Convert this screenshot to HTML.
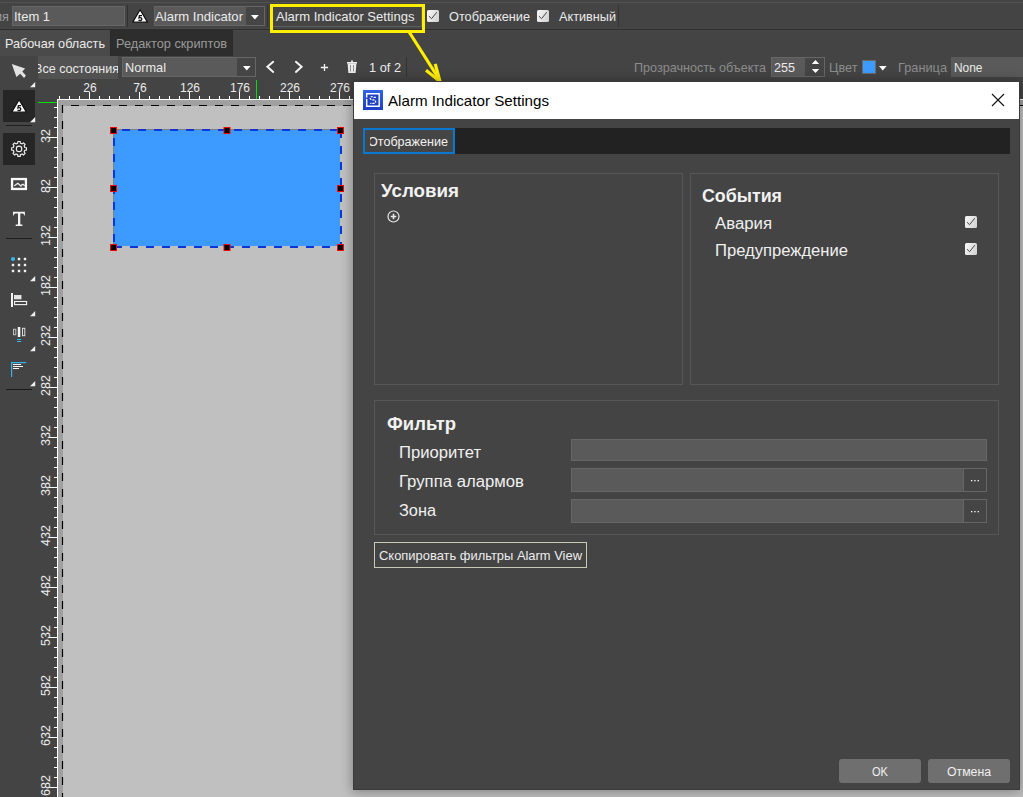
<!DOCTYPE html>
<html><head><meta charset="utf-8"><style>
html,body{margin:0;padding:0;}
body{width:1023px;height:797px;overflow:hidden;position:relative;background:#444;font-family:'Liberation Sans', sans-serif;}
</style></head><body>
<div style="position:absolute;left:0px;top:2px;width:1023px;height:1px;background:#525252"></div>
<div style="position:absolute;left:0px;top:28px;width:1023px;height:1px;background:#484848"></div>
<div style="position:absolute;left:0px;top:30px;width:1023px;height:1px;background:#484848"></div>
<div style="position:absolute;left:0px;top:29px;width:1023px;height:1px;background:#2d2d2d"></div>
<div style="position:absolute;left:-5px;top:10.00px;font:400 13px/13px 'Liberation Sans', sans-serif;color:#9a9a9a;white-space:nowrap;transform:scaleX(0.9782);transform-origin:0 0;">ия</div>
<div style="position:absolute;left:12px;top:6px;width:113px;height:20px;background:#5a5a5a;border:1px solid #666666;box-sizing:border-box"></div>
<div style="position:absolute;left:14px;top:10.00px;font:400 13px/13px 'Liberation Sans', sans-serif;color:#ebebeb;white-space:nowrap;transform:scaleX(0.9965);transform-origin:0 0;">Item 1</div>
<div style="position:absolute;left:127px;top:5px;width:1px;height:22px;background:#333"></div>
<svg style="position:absolute;left:131px;top:8px" width="18" height="16" viewBox="0 0 18 16"><path d="M9.1 1.7 L16.5 14.15 L1.7 14.15 Z" fill="#fff" stroke="#111" stroke-width="1.2" stroke-linejoin="round"/><path d="M11 7.7 H8.4 L8.0 9.9 C8.6 9.6 9.7 9.5 10.3 10 C10.9 10.5 10.9 11.6 10.3 12.1 C9.6 12.6 8.3 12.5 7.5 12.1" fill="none" stroke="#111" stroke-width="1.3"/></svg>
<div style="position:absolute;left:154px;top:6px;width:111px;height:20px;background:#5a5a5a;border:1px solid #666666;box-sizing:border-box"></div>
<div style="position:absolute;left:246px;top:7px;width:18px;height:18px;background:#454545"></div>
<svg style="position:absolute;left:251.3px;top:14.8px" width="9" height="6"><path d="M0 0 L7.8 0 L3.9 4.5 Z" fill="#fff"/></svg>
<div style="position:absolute;left:155px;top:10.00px;font:400 13px/13px 'Liberation Sans', sans-serif;color:#ebebeb;white-space:nowrap;transform:scaleX(1.0066);transform-origin:0 0;">Alarm Indicator</div>
<div style="position:absolute;left:267px;top:5px;width:1px;height:22px;background:#333"></div>
<div style="position:absolute;left:272px;top:6px;width:150px;height:20.5px;background:#454545;border:1px solid #5e5e5e;box-sizing:border-box"></div>
<div style="position:absolute;left:276px;top:10.00px;font:400 13px/13px 'Liberation Sans', sans-serif;color:#ebebeb;white-space:nowrap;transform:scaleX(1.0035);transform-origin:0 0;">Alarm Indicator Settings</div>
<div style="position:absolute;left:270px;top:4px;width:155px;height:29px;border:3px solid #ffee00;box-sizing:border-box"></div>
<svg style="position:absolute;left:427px;top:10px" width="12" height="12" viewBox="0 0 12 12"><defs><linearGradient id="cg" x1="0" y1="0" x2="1" y2="0.4"><stop offset="0" stop-color="#fafafa"/><stop offset="1" stop-color="#d6d6d6"/></linearGradient></defs><rect x="0" y="0" width="12" height="12" rx="1.6" fill="url(#cg)"/><path d="M1.9 6.1 L4.55 8.7 L9.8 2.2" fill="none" stroke="#474747" stroke-width="1"/></svg>
<div style="position:absolute;left:449px;top:10.00px;font:400 13px/13px 'Liberation Sans', sans-serif;color:#ebebeb;white-space:nowrap;transform:scaleX(0.9800);transform-origin:0 0;">Отображение</div>
<svg style="position:absolute;left:537px;top:10px" width="12" height="12" viewBox="0 0 12 12"><defs><linearGradient id="cg" x1="0" y1="0" x2="1" y2="0.4"><stop offset="0" stop-color="#fafafa"/><stop offset="1" stop-color="#d6d6d6"/></linearGradient></defs><rect x="0" y="0" width="12" height="12" rx="1.6" fill="url(#cg)"/><path d="M1.9 6.1 L4.55 8.7 L9.8 2.2" fill="none" stroke="#474747" stroke-width="1"/></svg>
<div style="position:absolute;left:559px;top:10.00px;font:400 13px/13px 'Liberation Sans', sans-serif;color:#ebebeb;white-space:nowrap;transform:scaleX(0.9757);transform-origin:0 0;">Активный</div>
<div style="position:absolute;left:618px;top:5px;width:1px;height:22px;background:#333"></div>
<div style="position:absolute;left:0px;top:30px;width:110px;height:26px;background:#4a4a4a"></div>
<div style="position:absolute;left:110px;top:30px;width:123px;height:26px;background:#2d2d2d"></div>
<div style="position:absolute;left:110px;top:30px;width:1px;height:26px;background:#2a2a2a"></div>
<div style="position:absolute;left:5px;top:37.00px;font:400 13px/13px 'Liberation Sans', sans-serif;color:#ebebeb;white-space:nowrap;transform:scaleX(0.9741);transform-origin:0 0;">Рабочая область</div>
<div style="position:absolute;left:116px;top:37.00px;font:400 13px/13px 'Liberation Sans', sans-serif;color:#9a9a9a;white-space:nowrap;transform:scaleX(0.9801);transform-origin:0 0;">Редактор скриптов</div>
<div style="position:absolute;left:38px;top:56px;width:80px;height:23px;background:#525252;overflow:hidden"><div style="position:absolute;right:-1px;top:5.9955px;font:400 13px/13px 'Liberation Sans', sans-serif;color:#ebebeb;white-space:nowrap;transform:scaleX(0.965);transform-origin:100% 0">Все состояния</div></div>
<div style="position:absolute;left:122px;top:57px;width:134px;height:20px;background:#5a5a5a;border:1px solid #666666;box-sizing:border-box"></div>
<div style="position:absolute;left:237px;top:58px;width:18px;height:18px;background:#454545"></div>
<svg style="position:absolute;left:242.8px;top:66px" width="9" height="6"><path d="M0 0 L7.6 0 L3.8 4.4 Z" fill="#fff"/></svg>
<div style="position:absolute;left:125px;top:61.00px;font:400 13px/13px 'Liberation Sans', sans-serif;color:#ebebeb;white-space:nowrap;transform:scaleX(0.9784);transform-origin:0 0;">Normal</div>
<svg style="position:absolute;left:264px;top:60px" width="150" height="16" viewBox="0 0 150 16"><path d="M9.2 1.8 L3.4 6.75 L9.2 11.9" fill="none" stroke="#f4f4f4" stroke-width="2" stroke-linecap="round"/><path d="M31.9 1.8 L37.6 6.75 L31.9 11.9" fill="none" stroke="#f4f4f4" stroke-width="2" stroke-linecap="round"/><path d="M56.8 7.5 H64.1 M60.5 4 V10.9" fill="none" stroke="#f4f4f4" stroke-width="1.3"/><rect x="83" y="2" width="10" height="1.6" fill="#f0f0f0"/><rect x="87.2" y="0.3" width="1.6" height="2" fill="#f0f0f0"/><path d="M83.6 3.5 L92.4 3.5 L91.6 13 L84.4 13 Z" fill="#ececec"/><rect x="86" y="5" width="0.8" height="6.5" fill="#777"/><rect x="89.2" y="5" width="0.8" height="6.5" fill="#777"/></svg>
<div style="position:absolute;left:369px;top:61.00px;font:400 13px/13px 'Liberation Sans', sans-serif;color:#ebebeb;white-space:nowrap;transform:scaleX(0.9837);transform-origin:0 0;">1 of 2</div>
<div style="position:absolute;left:406px;top:57px;width:1px;height:20px;background:#333"></div>
<div style="position:absolute;left:634px;top:61.00px;font:400 13px/13px 'Liberation Sans', sans-serif;color:#8c8c8c;white-space:nowrap;transform:scaleX(0.9685);transform-origin:0 0;">Прозрачность объекта</div>
<div style="position:absolute;left:771px;top:57px;width:54px;height:20px;background:#5a5a5a;border:1px solid #666666;box-sizing:border-box"></div>
<div style="position:absolute;left:805px;top:58px;width:19px;height:18px;background:#454545"></div>
<svg style="position:absolute;left:811px;top:59px" width="10" height="16"><path d="M0.8 5 L4.5 1 L8.2 5 Z M0.8 10 L4.5 14 L8.2 10 Z" fill="#fff"/></svg>
<div style="position:absolute;left:774px;top:61.00px;font:400 13px/13px 'Liberation Sans', sans-serif;color:#ebebeb;white-space:nowrap;transform:scaleX(0.9676);transform-origin:0 0;">255</div>
<div style="position:absolute;left:829px;top:61.00px;font:400 13px/13px 'Liberation Sans', sans-serif;color:#8c8c8c;white-space:nowrap;transform:scaleX(0.9780);transform-origin:0 0;">Цвет</div>
<div style="position:absolute;left:862px;top:60px;width:14px;height:14px;background:#3d9bff;border:1px solid #6a6a6a;box-sizing:border-box"></div>
<svg style="position:absolute;left:878.5px;top:66px" width="9" height="6"><path d="M0 0 L7.6 0 L3.8 4.5 Z" fill="#fff"/></svg>
<div style="position:absolute;left:898px;top:61.00px;font:400 13px/13px 'Liberation Sans', sans-serif;color:#8c8c8c;white-space:nowrap;transform:scaleX(0.9821);transform-origin:0 0;">Граница</div>
<div style="position:absolute;left:951px;top:57px;width:80px;height:20px;background:#5a5a5a"></div>
<div style="position:absolute;left:953.5px;top:61.00px;font:400 13px/13px 'Liberation Sans', sans-serif;color:#ebebeb;white-space:nowrap;transform:scaleX(0.9170);transform-origin:0 0;">None</div>
<svg style="position:absolute;left:0;top:0" width="40" height="90"><path d="M11.8 64 L25.1 68.6 L22.3 71.6 L25.9 75.6 L24.1 77.9 L20.2 73.7 L16.4 76.9 Z" fill="#e2e2e2"/></svg>
<svg style="position:absolute;left:29.9px;top:81.6px" width="6" height="6"><path d="M5.2 0 L5.2 5.3 L0 5.3 Z" fill="#f0f0f0"/></svg>
<div style="position:absolute;left:3px;top:90px;width:32px;height:32px;background:#262626"></div>
<svg style="position:absolute;left:10px;top:98px" width="18" height="16" viewBox="0 0 18 16"><path d="M9.1 1.7 L16.5 14.15 L1.7 14.15 Z" fill="#fff" stroke="#111" stroke-width="1.2" stroke-linejoin="round"/><path d="M11 7.7 H8.4 L8.0 9.9 C8.6 9.6 9.7 9.5 10.3 10 C10.9 10.5 10.9 11.6 10.3 12.1 C9.6 12.6 8.3 12.5 7.5 12.1" fill="none" stroke="#111" stroke-width="1.3"/></svg>
<svg style="position:absolute;left:29.9px;top:116.8px" width="6" height="6"><path d="M5.2 0 L5.2 5.3 L0 5.3 Z" fill="#f0f0f0"/></svg>
<div style="position:absolute;left:6px;top:125px;width:26px;height:1px;background:#1e1e1e"></div>
<div style="position:absolute;left:3px;top:133px;width:32px;height:32px;background:#262626"></div>
<svg style="position:absolute;left:10px;top:140px" width="18" height="18" viewBox="0 0 18 18"><path d="M7.67 3.16 L7.88 1.49 L10.22 1.49 L10.43 3.16 L12.13 3.87 L13.46 2.83 L15.12 4.49 L14.08 5.82 L14.79 7.52 L16.46 7.73 L16.46 10.07 L14.79 10.28 L14.08 11.98 L15.12 13.31 L13.46 14.97 L12.13 13.93 L10.43 14.64 L10.22 16.31 L7.88 16.31 L7.67 14.64 L5.97 13.93 L4.64 14.97 L2.98 13.31 L4.02 11.98 L3.31 10.28 L1.64 10.07 L1.64 7.73 L3.31 7.52 L4.02 5.82 L2.98 4.49 L4.64 2.83 L5.97 3.87 Z" fill="none" stroke="#f0f0f0" stroke-width="1.15" stroke-linejoin="round"/><circle cx="9.05" cy="8.9" r="2.75" fill="none" stroke="#f0f0f0" stroke-width="1.15"/></svg>
<svg style="position:absolute;left:10px;top:177px" width="18" height="14" viewBox="0 0 18 14"><rect x="2.05" y="2.05" width="13.86" height="9.9" fill="none" stroke="#fafafa" stroke-width="2.3"/><path d="M4.35 8.7 L7.8 6.3 L11.5 9.6 M11.3 8.1 L13 7.2 L14.8 8.9" fill="none" stroke="#f0f0f0" stroke-width="1.3"/></svg>
<svg style="position:absolute;left:0;top:0" width="40" height="240"><path d="M13 211.8 H24.9 V215.6 L24.2 215.6 C23.9 214.2 23.4 213.6 22 213.6 H20.3 V224.6 H22.4 V225.9 H15.7 V224.6 H18 V213.6 H16 C14.6 213.6 14 214.2 13.7 215.6 H13 Z" fill="#f4f4f4"/></svg>
<div style="position:absolute;left:6px;top:238px;width:26px;height:1.3px;background:#1e1e1e"></div>
<svg style="position:absolute;left:0;top:0" width="40" height="400"><circle cx="13" cy="259" r="2.1" fill="#38b6ea"/><rect x="17.8" y="257.8" width="2.4" height="2.4" fill="#f2f2f2"/><rect x="23.8" y="257.8" width="2.4" height="2.4" fill="#f2f2f2"/><rect x="11.8" y="263.8" width="2.4" height="2.4" fill="#f2f2f2"/><rect x="17.8" y="263.8" width="2.4" height="2.4" fill="#f2f2f2"/><rect x="23.8" y="263.8" width="2.4" height="2.4" fill="#f2f2f2"/><rect x="11.8" y="269.8" width="2.4" height="2.4" fill="#f2f2f2"/><rect x="17.8" y="269.8" width="2.4" height="2.4" fill="#f2f2f2"/><rect x="23.8" y="269.8" width="2.4" height="2.4" fill="#f2f2f2"/></svg>
<svg style="position:absolute;left:29.9px;top:275.6px" width="6" height="6"><path d="M5.2 0 L5.2 5.3 L0 5.3 Z" fill="#f0f0f0"/></svg>
<svg style="position:absolute;left:0;top:0" width="40" height="400"><rect x="11" y="293" width="2" height="14" fill="#f4f4f4"/><rect x="14.5" y="295.5" width="6.5" height="3.4" fill="#e4e4e4" stroke="#f4f4f4" stroke-width="0.8"/><rect x="14.6" y="301.5" width="12" height="3.1" fill="none" stroke="#f4f4f4" stroke-width="1.1"/></svg>
<svg style="position:absolute;left:29.9px;top:310.6px" width="6" height="6"><path d="M5.2 0 L5.2 5.3 L0 5.3 Z" fill="#f0f0f0"/></svg>
<svg style="position:absolute;left:0;top:0" width="40" height="400"><rect x="13.5" y="329.3" width="2.3" height="5.4" fill="none" stroke="#c4c4c4" stroke-width="1"/><rect x="17.8" y="327" width="2.5" height="10" fill="#f4f4f4"/><rect x="22.5" y="328.3" width="2.3" height="7.4" fill="none" stroke="#dcdcdc" stroke-width="1"/><rect x="17" y="339" width="4.2" height="1" fill="#38b6ea"/><rect x="17" y="341" width="4.2" height="1" fill="#38b6ea"/></svg>
<svg style="position:absolute;left:29.9px;top:345.6px" width="6" height="6"><path d="M5.2 0 L5.2 5.3 L0 5.3 Z" fill="#f0f0f0"/></svg>
<svg style="position:absolute;left:0;top:0" width="40" height="400"><rect x="11" y="362" width="1.2" height="15" fill="#38b6ea"/><rect x="11" y="362" width="15.2" height="1.2" fill="#38b6ea"/><rect x="13" y="364" width="8" height="1" fill="#f4f4f4"/><rect x="13" y="366" width="10" height="1" fill="#f4f4f4"/><rect x="13" y="368" width="6" height="1" fill="#f4f4f4"/></svg>
<svg style="position:absolute;left:29.9px;top:380.6px" width="6" height="6"><path d="M5.2 0 L5.2 5.3 L0 5.3 Z" fill="#f0f0f0"/></svg>
<div style="position:absolute;left:6px;top:389px;width:26px;height:1.3px;background:#1a1a1a"></div>
<svg style="position:absolute;left:0;top:0" width="1023" height="797"><rect x="59" y="96" width="1" height="3" fill="#fff"/><rect x="69" y="96" width="1" height="3" fill="#fff"/><rect x="79" y="96" width="1" height="3" fill="#fff"/><rect x="89" y="92" width="1" height="7" fill="#fff"/><rect x="99" y="96" width="1" height="3" fill="#fff"/><rect x="109" y="96" width="1" height="3" fill="#fff"/><rect x="119" y="96" width="1" height="3" fill="#fff"/><rect x="129" y="96" width="1" height="3" fill="#fff"/><rect x="139" y="92" width="1" height="7" fill="#fff"/><rect x="149" y="96" width="1" height="3" fill="#fff"/><rect x="159" y="96" width="1" height="3" fill="#fff"/><rect x="169" y="96" width="1" height="3" fill="#fff"/><rect x="179" y="96" width="1" height="3" fill="#fff"/><rect x="189" y="92" width="1" height="7" fill="#fff"/><rect x="199" y="96" width="1" height="3" fill="#fff"/><rect x="209" y="96" width="1" height="3" fill="#fff"/><rect x="219" y="96" width="1" height="3" fill="#fff"/><rect x="229" y="96" width="1" height="3" fill="#fff"/><rect x="239" y="92" width="1" height="7" fill="#fff"/><rect x="249" y="96" width="1" height="3" fill="#fff"/><rect x="259" y="96" width="1" height="3" fill="#fff"/><rect x="269" y="96" width="1" height="3" fill="#fff"/><rect x="279" y="96" width="1" height="3" fill="#fff"/><rect x="289" y="92" width="1" height="7" fill="#fff"/><rect x="299" y="96" width="1" height="3" fill="#fff"/><rect x="309" y="96" width="1" height="3" fill="#fff"/><rect x="319" y="96" width="1" height="3" fill="#fff"/><rect x="329" y="96" width="1" height="3" fill="#fff"/><rect x="339" y="92" width="1" height="7" fill="#fff"/><rect x="349" y="96" width="1" height="3" fill="#fff"/><rect x="359" y="96" width="1" height="3" fill="#fff"/><rect x="369" y="96" width="1" height="3" fill="#fff"/><rect x="379" y="96" width="1" height="3" fill="#fff"/><rect x="389" y="92" width="1" height="7" fill="#fff"/><rect x="399" y="96" width="1" height="3" fill="#fff"/><rect x="409" y="96" width="1" height="3" fill="#fff"/><rect x="419" y="96" width="1" height="3" fill="#fff"/><rect x="429" y="96" width="1" height="3" fill="#fff"/><rect x="439" y="92" width="1" height="7" fill="#fff"/><rect x="449" y="96" width="1" height="3" fill="#fff"/><rect x="459" y="96" width="1" height="3" fill="#fff"/><rect x="469" y="96" width="1" height="3" fill="#fff"/><rect x="479" y="96" width="1" height="3" fill="#fff"/><rect x="489" y="92" width="1" height="7" fill="#fff"/><rect x="499" y="96" width="1" height="3" fill="#fff"/><rect x="509" y="96" width="1" height="3" fill="#fff"/><rect x="519" y="96" width="1" height="3" fill="#fff"/><rect x="529" y="96" width="1" height="3" fill="#fff"/><rect x="539" y="92" width="1" height="7" fill="#fff"/><rect x="549" y="96" width="1" height="3" fill="#fff"/><rect x="559" y="96" width="1" height="3" fill="#fff"/><rect x="569" y="96" width="1" height="3" fill="#fff"/><rect x="579" y="96" width="1" height="3" fill="#fff"/><rect x="589" y="92" width="1" height="7" fill="#fff"/><rect x="599" y="96" width="1" height="3" fill="#fff"/><rect x="609" y="96" width="1" height="3" fill="#fff"/><rect x="619" y="96" width="1" height="3" fill="#fff"/><rect x="629" y="96" width="1" height="3" fill="#fff"/><rect x="639" y="92" width="1" height="7" fill="#fff"/><rect x="649" y="96" width="1" height="3" fill="#fff"/><rect x="659" y="96" width="1" height="3" fill="#fff"/><rect x="669" y="96" width="1" height="3" fill="#fff"/><rect x="679" y="96" width="1" height="3" fill="#fff"/><rect x="689" y="92" width="1" height="7" fill="#fff"/><rect x="699" y="96" width="1" height="3" fill="#fff"/><rect x="709" y="96" width="1" height="3" fill="#fff"/><rect x="719" y="96" width="1" height="3" fill="#fff"/><rect x="729" y="96" width="1" height="3" fill="#fff"/><rect x="739" y="92" width="1" height="7" fill="#fff"/><rect x="749" y="96" width="1" height="3" fill="#fff"/><rect x="759" y="96" width="1" height="3" fill="#fff"/><rect x="769" y="96" width="1" height="3" fill="#fff"/><rect x="779" y="96" width="1" height="3" fill="#fff"/><rect x="789" y="92" width="1" height="7" fill="#fff"/><rect x="799" y="96" width="1" height="3" fill="#fff"/><rect x="809" y="96" width="1" height="3" fill="#fff"/><rect x="819" y="96" width="1" height="3" fill="#fff"/><rect x="829" y="96" width="1" height="3" fill="#fff"/><rect x="839" y="92" width="1" height="7" fill="#fff"/><rect x="849" y="96" width="1" height="3" fill="#fff"/><rect x="859" y="96" width="1" height="3" fill="#fff"/><rect x="869" y="96" width="1" height="3" fill="#fff"/><rect x="879" y="96" width="1" height="3" fill="#fff"/><rect x="889" y="92" width="1" height="7" fill="#fff"/><rect x="899" y="96" width="1" height="3" fill="#fff"/><rect x="909" y="96" width="1" height="3" fill="#fff"/><rect x="919" y="96" width="1" height="3" fill="#fff"/><rect x="929" y="96" width="1" height="3" fill="#fff"/><rect x="939" y="92" width="1" height="7" fill="#fff"/><rect x="949" y="96" width="1" height="3" fill="#fff"/><rect x="959" y="96" width="1" height="3" fill="#fff"/><rect x="969" y="96" width="1" height="3" fill="#fff"/><rect x="979" y="96" width="1" height="3" fill="#fff"/><rect x="989" y="92" width="1" height="7" fill="#fff"/><rect x="999" y="96" width="1" height="3" fill="#fff"/><rect x="1009" y="96" width="1" height="3" fill="#fff"/><rect x="1019" y="96" width="1" height="3" fill="#fff"/><rect x="54" y="107" width="3" height="1" fill="#fff"/><rect x="54" y="117" width="3" height="1" fill="#fff"/><rect x="54" y="127" width="3" height="1" fill="#fff"/><rect x="49" y="137" width="8" height="1" fill="#fff"/><rect x="54" y="147" width="3" height="1" fill="#fff"/><rect x="54" y="157" width="3" height="1" fill="#fff"/><rect x="54" y="167" width="3" height="1" fill="#fff"/><rect x="54" y="177" width="3" height="1" fill="#fff"/><rect x="49" y="187" width="8" height="1" fill="#fff"/><rect x="54" y="197" width="3" height="1" fill="#fff"/><rect x="54" y="207" width="3" height="1" fill="#fff"/><rect x="54" y="217" width="3" height="1" fill="#fff"/><rect x="54" y="227" width="3" height="1" fill="#fff"/><rect x="49" y="237" width="8" height="1" fill="#fff"/><rect x="54" y="247" width="3" height="1" fill="#fff"/><rect x="54" y="257" width="3" height="1" fill="#fff"/><rect x="54" y="267" width="3" height="1" fill="#fff"/><rect x="54" y="277" width="3" height="1" fill="#fff"/><rect x="49" y="287" width="8" height="1" fill="#fff"/><rect x="54" y="297" width="3" height="1" fill="#fff"/><rect x="54" y="307" width="3" height="1" fill="#fff"/><rect x="54" y="317" width="3" height="1" fill="#fff"/><rect x="54" y="327" width="3" height="1" fill="#fff"/><rect x="49" y="337" width="8" height="1" fill="#fff"/><rect x="54" y="347" width="3" height="1" fill="#fff"/><rect x="54" y="357" width="3" height="1" fill="#fff"/><rect x="54" y="367" width="3" height="1" fill="#fff"/><rect x="54" y="377" width="3" height="1" fill="#fff"/><rect x="49" y="387" width="8" height="1" fill="#fff"/><rect x="54" y="397" width="3" height="1" fill="#fff"/><rect x="54" y="407" width="3" height="1" fill="#fff"/><rect x="54" y="417" width="3" height="1" fill="#fff"/><rect x="54" y="427" width="3" height="1" fill="#fff"/><rect x="49" y="437" width="8" height="1" fill="#fff"/><rect x="54" y="447" width="3" height="1" fill="#fff"/><rect x="54" y="457" width="3" height="1" fill="#fff"/><rect x="54" y="467" width="3" height="1" fill="#fff"/><rect x="54" y="477" width="3" height="1" fill="#fff"/><rect x="49" y="487" width="8" height="1" fill="#fff"/><rect x="54" y="497" width="3" height="1" fill="#fff"/><rect x="54" y="507" width="3" height="1" fill="#fff"/><rect x="54" y="517" width="3" height="1" fill="#fff"/><rect x="54" y="527" width="3" height="1" fill="#fff"/><rect x="49" y="537" width="8" height="1" fill="#fff"/><rect x="54" y="547" width="3" height="1" fill="#fff"/><rect x="54" y="557" width="3" height="1" fill="#fff"/><rect x="54" y="567" width="3" height="1" fill="#fff"/><rect x="54" y="577" width="3" height="1" fill="#fff"/><rect x="49" y="587" width="8" height="1" fill="#fff"/><rect x="54" y="597" width="3" height="1" fill="#fff"/><rect x="54" y="607" width="3" height="1" fill="#fff"/><rect x="54" y="617" width="3" height="1" fill="#fff"/><rect x="54" y="627" width="3" height="1" fill="#fff"/><rect x="49" y="637" width="8" height="1" fill="#fff"/><rect x="54" y="647" width="3" height="1" fill="#fff"/><rect x="54" y="657" width="3" height="1" fill="#fff"/><rect x="54" y="667" width="3" height="1" fill="#fff"/><rect x="54" y="677" width="3" height="1" fill="#fff"/><rect x="49" y="687" width="8" height="1" fill="#fff"/><rect x="54" y="697" width="3" height="1" fill="#fff"/><rect x="54" y="707" width="3" height="1" fill="#fff"/><rect x="54" y="717" width="3" height="1" fill="#fff"/><rect x="54" y="727" width="3" height="1" fill="#fff"/><rect x="49" y="737" width="8" height="1" fill="#fff"/><rect x="54" y="747" width="3" height="1" fill="#fff"/><rect x="54" y="757" width="3" height="1" fill="#fff"/><rect x="54" y="767" width="3" height="1" fill="#fff"/><rect x="54" y="777" width="3" height="1" fill="#fff"/><rect x="49" y="787" width="8" height="1" fill="#fff"/><rect x="57" y="99" width="966" height="1" fill="#fff"/><rect x="57" y="99" width="1" height="698" fill="#fff"/><rect x="256" y="80" width="1" height="19" fill="#00e000"/><rect x="38" y="102" width="19" height="1" fill="#00e000"/></svg>
<div style="position:absolute;left:80px;top:81.84px;font:400 12px/12px 'Liberation Sans', sans-serif;color:#ebebeb;white-space:nowrap;width:20px;text-align:center;">26</div>
<div style="position:absolute;left:130px;top:81.84px;font:400 12px/12px 'Liberation Sans', sans-serif;color:#ebebeb;white-space:nowrap;width:20px;text-align:center;">76</div>
<div style="position:absolute;left:180px;top:81.84px;font:400 12px/12px 'Liberation Sans', sans-serif;color:#ebebeb;white-space:nowrap;width:20px;text-align:center;">126</div>
<div style="position:absolute;left:230px;top:81.84px;font:400 12px/12px 'Liberation Sans', sans-serif;color:#ebebeb;white-space:nowrap;width:20px;text-align:center;">176</div>
<div style="position:absolute;left:280px;top:81.84px;font:400 12px/12px 'Liberation Sans', sans-serif;color:#ebebeb;white-space:nowrap;width:20px;text-align:center;">226</div>
<div style="position:absolute;left:330px;top:81.84px;font:400 12px/12px 'Liberation Sans', sans-serif;color:#ebebeb;white-space:nowrap;width:20px;text-align:center;">276</div>
<div style="position:absolute;left:35.5px;top:126px;width:20px;height:20px;"><div style="position:absolute;left:0;top:0;width:20px;height:20px;transform:rotate(-90deg);font:400 12.5px/20px 'Liberation Sans', sans-serif;color:#ebebeb;text-align:center;">32</div></div>
<div style="position:absolute;left:35.5px;top:176px;width:20px;height:20px;"><div style="position:absolute;left:0;top:0;width:20px;height:20px;transform:rotate(-90deg);font:400 12.5px/20px 'Liberation Sans', sans-serif;color:#ebebeb;text-align:center;">82</div></div>
<div style="position:absolute;left:35.5px;top:226px;width:20px;height:20px;"><div style="position:absolute;left:0;top:0;width:20px;height:20px;transform:rotate(-90deg);font:400 12.5px/20px 'Liberation Sans', sans-serif;color:#ebebeb;text-align:center;">132</div></div>
<div style="position:absolute;left:35.5px;top:276px;width:20px;height:20px;"><div style="position:absolute;left:0;top:0;width:20px;height:20px;transform:rotate(-90deg);font:400 12.5px/20px 'Liberation Sans', sans-serif;color:#ebebeb;text-align:center;">182</div></div>
<div style="position:absolute;left:35.5px;top:326px;width:20px;height:20px;"><div style="position:absolute;left:0;top:0;width:20px;height:20px;transform:rotate(-90deg);font:400 12.5px/20px 'Liberation Sans', sans-serif;color:#ebebeb;text-align:center;">232</div></div>
<div style="position:absolute;left:35.5px;top:376px;width:20px;height:20px;"><div style="position:absolute;left:0;top:0;width:20px;height:20px;transform:rotate(-90deg);font:400 12.5px/20px 'Liberation Sans', sans-serif;color:#ebebeb;text-align:center;">282</div></div>
<div style="position:absolute;left:35.5px;top:426px;width:20px;height:20px;"><div style="position:absolute;left:0;top:0;width:20px;height:20px;transform:rotate(-90deg);font:400 12.5px/20px 'Liberation Sans', sans-serif;color:#ebebeb;text-align:center;">332</div></div>
<div style="position:absolute;left:35.5px;top:476px;width:20px;height:20px;"><div style="position:absolute;left:0;top:0;width:20px;height:20px;transform:rotate(-90deg);font:400 12.5px/20px 'Liberation Sans', sans-serif;color:#ebebeb;text-align:center;">382</div></div>
<div style="position:absolute;left:35.5px;top:526px;width:20px;height:20px;"><div style="position:absolute;left:0;top:0;width:20px;height:20px;transform:rotate(-90deg);font:400 12.5px/20px 'Liberation Sans', sans-serif;color:#ebebeb;text-align:center;">432</div></div>
<div style="position:absolute;left:35.5px;top:576px;width:20px;height:20px;"><div style="position:absolute;left:0;top:0;width:20px;height:20px;transform:rotate(-90deg);font:400 12.5px/20px 'Liberation Sans', sans-serif;color:#ebebeb;text-align:center;">482</div></div>
<div style="position:absolute;left:35.5px;top:626px;width:20px;height:20px;"><div style="position:absolute;left:0;top:0;width:20px;height:20px;transform:rotate(-90deg);font:400 12.5px/20px 'Liberation Sans', sans-serif;color:#ebebeb;text-align:center;">532</div></div>
<div style="position:absolute;left:35.5px;top:676px;width:20px;height:20px;"><div style="position:absolute;left:0;top:0;width:20px;height:20px;transform:rotate(-90deg);font:400 12.5px/20px 'Liberation Sans', sans-serif;color:#ebebeb;text-align:center;">582</div></div>
<div style="position:absolute;left:35.5px;top:726px;width:20px;height:20px;"><div style="position:absolute;left:0;top:0;width:20px;height:20px;transform:rotate(-90deg);font:400 12.5px/20px 'Liberation Sans', sans-serif;color:#ebebeb;text-align:center;">632</div></div>
<div style="position:absolute;left:35.5px;top:776px;width:20px;height:20px;"><div style="position:absolute;left:0;top:0;width:20px;height:20px;transform:rotate(-90deg);font:400 12.5px/20px 'Liberation Sans', sans-serif;color:#ebebeb;text-align:center;">682</div></div>
<div style="position:absolute;left:58px;top:100px;width:965px;height:697px;background:#a0a0a0"></div>
<div style="position:absolute;left:63px;top:106px;width:960px;height:691px;background:#c0c0c0"></div>
<svg style="position:absolute;left:0;top:0" width="1023" height="797"><line x1="71" y1="105.5" x2="1023" y2="105.5" stroke="#000" stroke-width="1" stroke-dasharray="8 8"/><line x1="62.5" y1="105" x2="62.5" y2="797" stroke="#000" stroke-width="1.2" stroke-dasharray="8 8"/></svg>
<div style="position:absolute;left:113px;top:129px;width:227px;height:117px;background:#3d9bff;border-top:1px solid #7f7f7f;border-left:1px solid #7f7f7f;box-sizing:border-box"></div>
<svg style="position:absolute;left:0;top:0" width="1023" height="797"><line x1="122" y1="130" x2="340" y2="130" stroke="#0a37d8" stroke-width="2" stroke-dasharray="8 8"/><line x1="114" y1="247" x2="340" y2="247" stroke="#0a37d8" stroke-width="2" stroke-dasharray="8 8"/><line x1="114" y1="138" x2="114" y2="246" stroke="#0a37d8" stroke-width="2" stroke-dasharray="8 8"/><line x1="341" y1="130" x2="341" y2="248" stroke="#0a37d8" stroke-width="2" stroke-dasharray="8 8"/><rect x="110.5" y="127.5" width="6" height="6" fill="#000" stroke="#ff0000" stroke-width="1"/><rect x="110.5" y="185.5" width="6" height="6" fill="#000" stroke="#ff0000" stroke-width="1"/><rect x="110.5" y="244.5" width="6" height="6" fill="#000" stroke="#ff0000" stroke-width="1"/><rect x="224" y="127.5" width="6" height="6" fill="#000" stroke="#ff0000" stroke-width="1"/><rect x="224" y="244.5" width="6" height="6" fill="#000" stroke="#ff0000" stroke-width="1"/><rect x="337.5" y="127.5" width="6" height="6" fill="#000" stroke="#ff0000" stroke-width="1"/><rect x="337.5" y="185.5" width="6" height="6" fill="#000" stroke="#ff0000" stroke-width="1"/><rect x="337.5" y="244.5" width="6" height="6" fill="#000" stroke="#ff0000" stroke-width="1"/></svg>
<svg style="position:absolute;left:0;top:0" width="1023" height="797"><path d="M408.5 31 L439 79" stroke="#ffee00" stroke-width="3.2" fill="none"/><path d="M426 70.3 L440 81.5 L435.2 63.8" stroke="#ffee00" stroke-width="3.2" fill="none" stroke-linejoin="miter"/></svg>
<div style="position:absolute;left:353px;top:81px;width:667px;height:709px;background:#444;box-shadow:0 1px 11px 1px rgba(0,0,0,0.32);border:1px solid #3a3a3a;box-sizing:border-box"></div>
<div style="position:absolute;left:354px;top:82px;width:665px;height:37px;background:#fff"></div>
<svg style="position:absolute;left:363px;top:90px" width="20" height="20" viewBox="0 0 20 20"><defs><linearGradient id="ig" x1="0" y1="0" x2="0" y2="1"><stop offset="0" stop-color="#3064e6"/><stop offset="1" stop-color="#1b3fc4"/></linearGradient></defs><rect width="20" height="20" fill="url(#ig)"/><rect x="4.3" y="4.3" width="11.4" height="11.4" fill="#1e40c4"/><path d="M3.7 7.6 V3.7 H16.2 V16.2 H3.7 V9" fill="none" stroke="#fff" stroke-width="1.4"/><path d="M12.9 7.4 H11.2 C9 6 7 6.8 7.2 8.5 C7.4 9.9 9.8 9.8 11.6 10.2 C13.3 10.8 13.1 13.3 10.6 13.3 H7.2" fill="none" stroke="#fff" stroke-width="1.25" stroke-dasharray="2.2 0.9"/></svg>
<div style="position:absolute;left:388px;top:93.30px;font:400 15px/15px 'Liberation Sans', sans-serif;color:#000;white-space:nowrap;transform:scaleX(1.0110);transform-origin:0 0;">Alarm Indicator Settings</div>
<svg style="position:absolute;left:991px;top:93px" width="14" height="14"><path d="M1 1 L13 13 M13 1 L1 13" stroke="#111" stroke-width="1.1"/></svg>
<div style="position:absolute;left:363px;top:128px;width:647px;height:26px;background:#222"></div>
<div style="position:absolute;left:363px;top:128px;width:92px;height:26px;background:#454545;border:2px solid #0a78d0;box-sizing:border-box;overflow:hidden"></div>
<div style="position:absolute;left:369.5px;top:130px;width:84px;height:22px;overflow:hidden">
<div style="position:absolute;left:-1.5px;top:5.00px;font:400 13px/13px 'Liberation Sans', sans-serif;color:#f2f2f2;white-space:nowrap;transform:scaleX(0.9679);transform-origin:0 0;">Отображение</div>
</div>
<div style="position:absolute;left:374px;top:173px;width:309px;height:212px;border:1px solid #575757;box-sizing:border-box"></div>
<div style="position:absolute;left:690px;top:173px;width:309px;height:212px;border:1px solid #575757;box-sizing:border-box"></div>
<div style="position:absolute;left:381px;top:181.76px;font:700 18px/18px 'Liberation Sans', sans-serif;color:#f2f2f2;white-space:nowrap;transform:scaleX(1.0413);transform-origin:0 0;">Условия</div>
<svg style="position:absolute;left:386.5px;top:210.3px" width="13" height="13" viewBox="0 0 13 13"><circle cx="6.5" cy="6.5" r="5.5" fill="none" stroke="#e8e8e8" stroke-width="1.2"/><path d="M3.7 6.5 H9.3 M6.5 3.7 V9.3" stroke="#e8e8e8" stroke-width="1.6"/></svg>
<div style="position:absolute;left:702px;top:186.76px;font:700 18px/18px 'Liberation Sans', sans-serif;color:#f2f2f2;white-space:nowrap;transform:scaleX(0.9892);transform-origin:0 0;">События</div>
<div style="position:absolute;left:715px;top:216.46px;font:400 16px/16px 'Liberation Sans', sans-serif;color:#f0f0f0;white-space:nowrap;transform:scaleX(1.0480);transform-origin:0 0;">Авария</div>
<div style="position:absolute;left:715px;top:243.46px;font:400 16px/16px 'Liberation Sans', sans-serif;color:#f0f0f0;white-space:nowrap;transform:scaleX(1.0377);transform-origin:0 0;">Предупреждение</div>
<svg style="position:absolute;left:965px;top:216px" width="12" height="12" viewBox="0 0 12 12"><defs><linearGradient id="cg" x1="0" y1="0" x2="1" y2="0.4"><stop offset="0" stop-color="#fafafa"/><stop offset="1" stop-color="#d6d6d6"/></linearGradient></defs><rect x="0" y="0" width="12" height="12" rx="1.6" fill="url(#cg)"/><path d="M1.9 6.1 L4.55 8.7 L9.8 2.2" fill="none" stroke="#474747" stroke-width="1"/></svg>
<svg style="position:absolute;left:965px;top:243px" width="12" height="12" viewBox="0 0 12 12"><defs><linearGradient id="cg" x1="0" y1="0" x2="1" y2="0.4"><stop offset="0" stop-color="#fafafa"/><stop offset="1" stop-color="#d6d6d6"/></linearGradient></defs><rect x="0" y="0" width="12" height="12" rx="1.6" fill="url(#cg)"/><path d="M1.9 6.1 L4.55 8.7 L9.8 2.2" fill="none" stroke="#474747" stroke-width="1"/></svg>
<div style="position:absolute;left:374px;top:400px;width:625px;height:135px;border:1px solid #575757;box-sizing:border-box"></div>
<div style="position:absolute;left:387px;top:414.76px;font:700 18px/18px 'Liberation Sans', sans-serif;color:#f2f2f2;white-space:nowrap;transform:scaleX(1.0272);transform-origin:0 0;">Фильтр</div>
<div style="position:absolute;left:399px;top:445.46px;font:400 16px/16px 'Liberation Sans', sans-serif;color:#f0f0f0;white-space:nowrap;transform:scaleX(1.0390);transform-origin:0 0;">Приоритет</div>
<div style="position:absolute;left:399px;top:474.46px;font:400 16px/16px 'Liberation Sans', sans-serif;color:#f0f0f0;white-space:nowrap;transform:scaleX(1.0452);transform-origin:0 0;">Группа алармов</div>
<div style="position:absolute;left:399px;top:503.46px;font:400 16px/16px 'Liberation Sans', sans-serif;color:#f0f0f0;white-space:nowrap;transform:scaleX(1.0194);transform-origin:0 0;">Зона</div>
<div style="position:absolute;left:571px;top:439px;width:416px;height:22px;background:#5a5a5a;border:1px solid #666666;box-sizing:border-box"></div>
<div style="position:absolute;left:571px;top:468px;width:416px;height:24px;background:#5a5a5a;border:1px solid #666666;box-sizing:border-box"></div>
<div style="position:absolute;left:571px;top:499px;width:416px;height:24px;background:#5a5a5a;border:1px solid #666666;box-sizing:border-box"></div>
<div style="position:absolute;left:963px;top:469px;width:23px;height:22px;background:#454545;border-left:1px solid #666;box-sizing:border-box"></div>
<svg style="position:absolute;left:970.5px;top:480px" width="10" height="2"><rect x="0" y="0" width="1.3" height="1.3" fill="#fff"/><rect x="3.3" y="0" width="1.3" height="1.3" fill="#fff"/><rect x="6.6" y="0" width="1.3" height="1.3" fill="#fff"/></svg>
<div style="position:absolute;left:963px;top:500px;width:23px;height:22px;background:#454545;border-left:1px solid #666;box-sizing:border-box"></div>
<svg style="position:absolute;left:970.5px;top:511px" width="10" height="2"><rect x="0" y="0" width="1.3" height="1.3" fill="#fff"/><rect x="3.3" y="0" width="1.3" height="1.3" fill="#fff"/><rect x="6.6" y="0" width="1.3" height="1.3" fill="#fff"/></svg>
<div style="position:absolute;left:374px;top:542px;width:213px;height:26px;border:1px solid #c9c9b6;box-sizing:border-box"></div>
<div style="position:absolute;left:379px;top:549.00px;font:400 13px/13px 'Liberation Sans', sans-serif;color:#ececec;white-space:nowrap;transform:scaleX(0.9941);transform-origin:0 0;">Скопировать фильтры Alarm View</div>
<div style="position:absolute;left:839px;top:759px;width:82px;height:24px;background:#6f6f6f;border-radius:3px"></div>
<div style="position:absolute;left:928px;top:759px;width:82px;height:24px;background:#6f6f6f;border-radius:3px"></div>
<div style="position:absolute;left:872px;top:765.84px;font:400 12px/12px 'Liberation Sans', sans-serif;color:#f0f0f0;white-space:nowrap;transform:scaleX(0.9225);transform-origin:0 0;">OK</div>
<div style="position:absolute;left:947px;top:765.84px;font:400 12px/12px 'Liberation Sans', sans-serif;color:#f0f0f0;white-space:nowrap;transform:scaleX(1.0218);transform-origin:0 0;">Отмена</div>
</body></html>
